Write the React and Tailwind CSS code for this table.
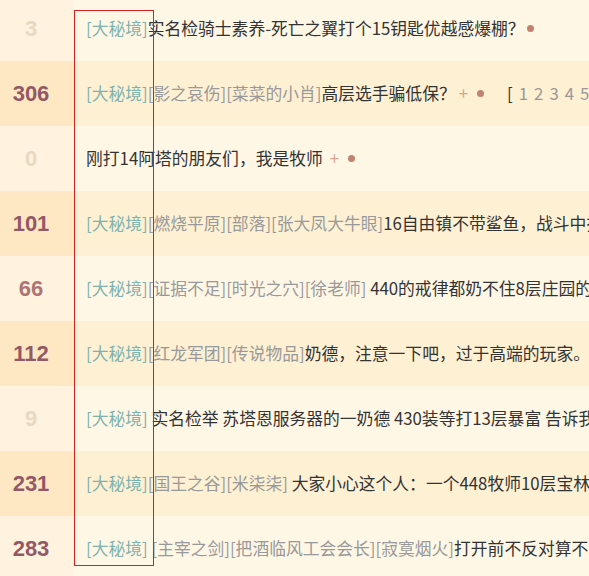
const rows = [
  { n: "3", tone: "light", tags: [], title: "实名检骑士素养-死亡之翼打个15钥匙优越感爆棚？", dot: true },
  { n: "306", tone: "dark", tags: ["影之哀伤", "菜菜的小肖"], title: "高层选手骗低保？", plus: "ml-[3px]", dot: true, pages: true },
  { n: "0", tone: "light", noTag: true, tags: [], title: "刚打14阿塔的朋友们，我是牧师", plus: "ml-[7px]", dot: true },
  { n: "101", tone: "dark", tags: ["燃烧平原", "部落", "张大凤大牛眼"], title: "16自由镇不带鲨鱼，战斗中把我踢了" },
  { n: "66", tone: "mid", tags: ["证据不足", "时光之穴", "徐老师"], title: " 440的戒律都奶不住8层庄园的老板" },
  { n: "112", tone: "dark", tags: ["红龙军团", "传说物品"], title: "奶德，注意一下吧，过于高端的玩家。" },
  { n: "9", tone: "light", tags: [], title: " 实名检举 苏塔恩服务器的一奶德 430装等打13层暴富 告诉我" },
  { n: "231", tone: "dark", tags: ["国王之谷", "米柒柒"], title: " 大家小心这个人：一个448牧师10层宝林" },
  { n: "283", tone: "dark", tags: [" 主宰之剑", "把酒临风工会会长", "寂寞烟火"], title: "打开前不反对算不算" },
];

const toneClass = {
  light: "text-[#e8d9c2]",
  mid: "text-[#ae7474]",
  dark: "text-[#935866]",
};

function Row({ row, index }) {
  const even = index % 2 === 1;
  return (
    <div className={`flex h-[65px] ${even ? "bg-[#fef0d3]" : "bg-[#fff7e6]"}`}>
      <div
        className={`flex w-[73px] shrink-0 items-center justify-center pr-[11px] font-['Liberation_Sans',Arial,sans-serif] text-[22px] font-bold ${toneClass[row.tone]} ${even ? "bg-[#fee8c4]" : "bg-[#fff3df]"}`}
      >
        {row.n}
      </div>
      <div className="flex min-w-0 flex-1 items-center overflow-hidden whitespace-nowrap pl-[13px] text-[16.8px] text-[#333]">
        {!row.noTag && <span className="text-[#7fb2ad]">[大秘境]</span>}
        {row.tags.map((t) => (
          <span key={t} className="whitespace-pre text-[#999]">
            {t.startsWith(" ") ? " [" + t.slice(1) + "]" : "[" + t + "]"}
          </span>
        ))}
        <span className="whitespace-pre">{row.title}</span>
        {row.plus && <span className={`${row.plus} text-[#d4a595]`}>+</span>}
        {row.dot && (
          <span className={`${row.plus ? "ml-[9px]" : "ml-[2px]"} inline-block h-[7px] w-[7px] shrink-0 rounded-full bg-[#c38270]`} />
        )}
        {row.pages && (
          <span className="ml-[23px] flex items-center text-[#333]">
            [
            {["1", "2", "3", "4", "5"].map((p) => (
              <span key={p} className="ml-[6px] text-[#999]">
                {p}
              </span>
            ))}
          </span>
        )}
      </div>
    </div>
  );
}

export default function App() {
  return (
    <div className="relative h-[576px] w-[589px] overflow-hidden bg-[#fff7e6] font-['Noto_Sans_CJK_SC','Noto_Sans',sans-serif]">
      <div className="-mt-[4px] flex flex-col">
        {rows.map((r, i) => (
          <Row key={i} row={r} index={i} />
        ))}
      </div>
      <div className="pointer-events-none absolute left-[74px] top-[10px] h-[556px] w-[80px] border border-[#d42020]" />
    </div>
  );
}
